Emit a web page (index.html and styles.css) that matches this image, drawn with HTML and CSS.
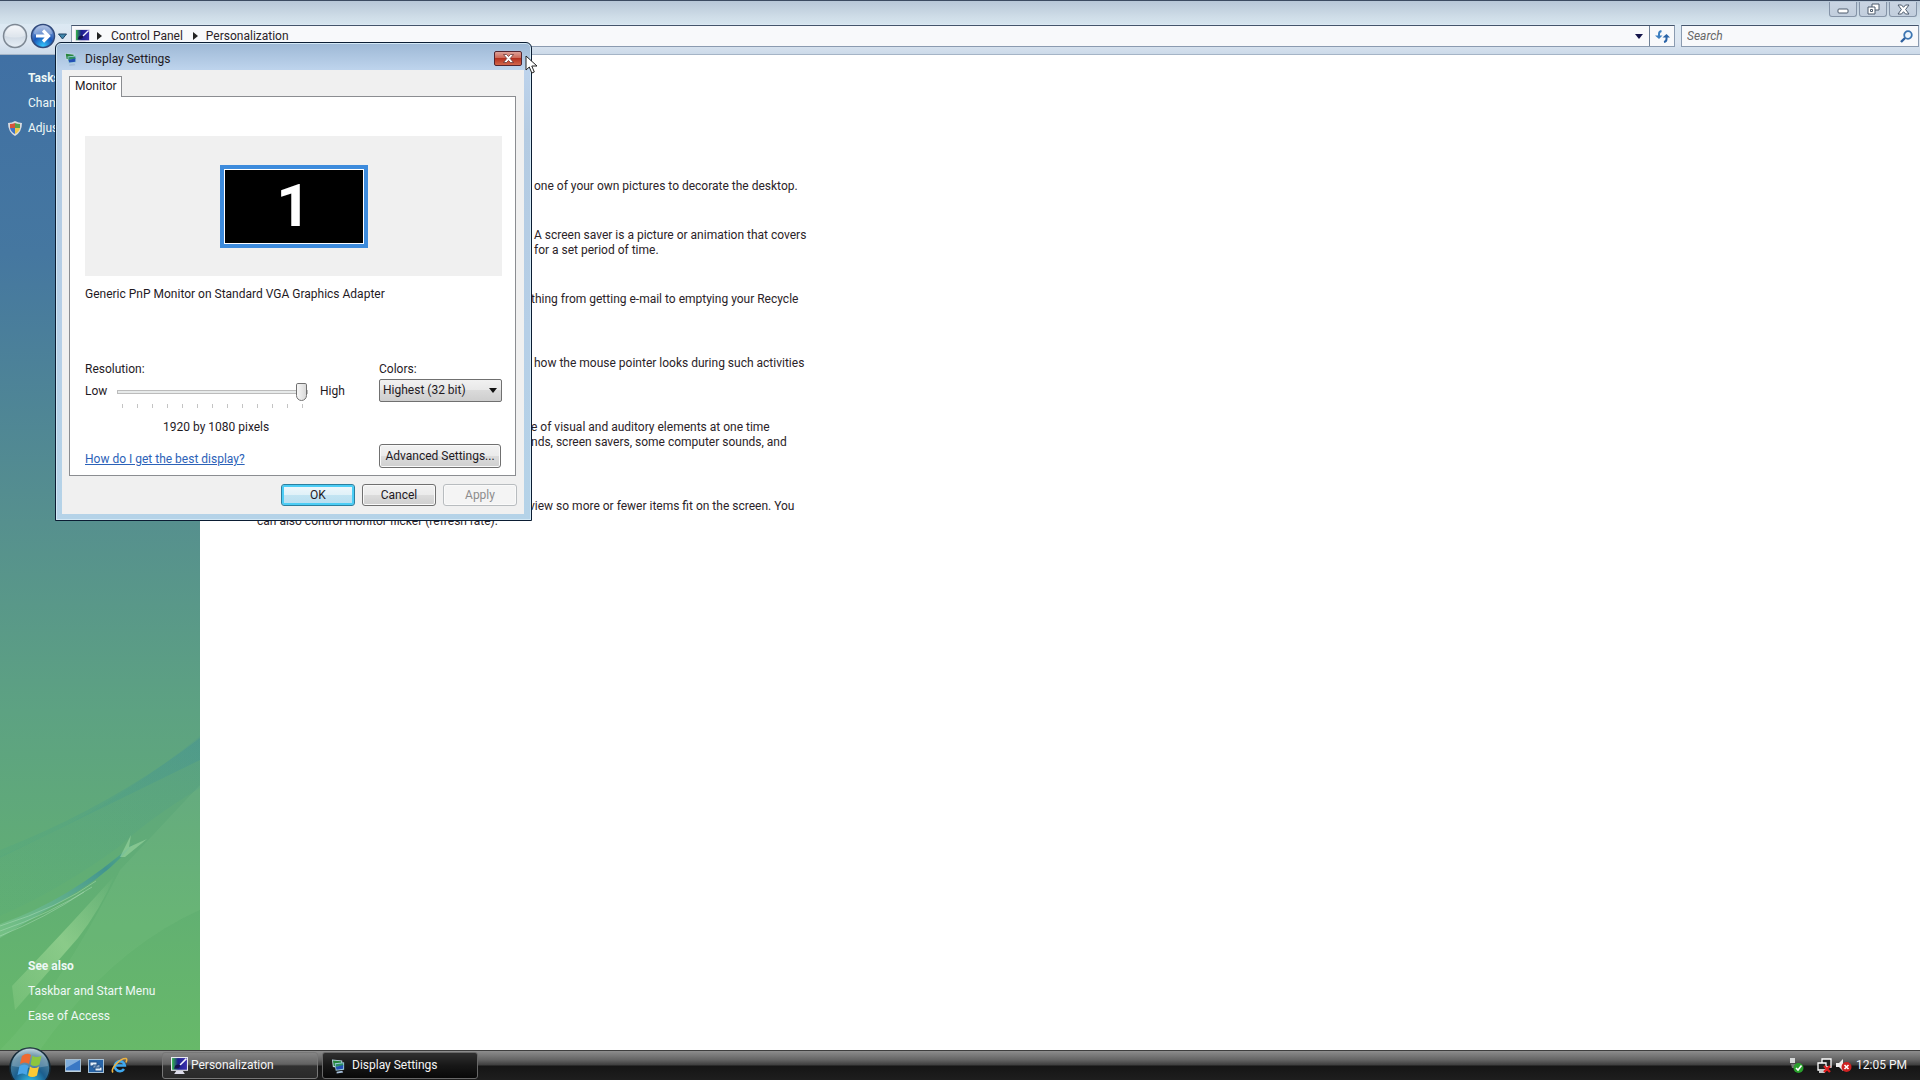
FILE: index.html
```
<!DOCTYPE html>
<html lang="en">
<head>
  <meta charset="UTF-8">
  <title>Personalization</title>
  <meta name="viewport" content="width=device-width, initial-scale=1.0">
  <link rel="stylesheet" href="styles.css">
</head>
<body>
  <svg width="0" height="0" class="defs" aria-hidden="true">
    <defs>
      <linearGradient id="screen" x1="0" y1="0" x2="1" y2="0">
        <stop offset="0" stop-color="#35b84a"/><stop offset=".4" stop-color="#1c1f8c"/><stop offset="1" stop-color="#3b2fae"/>
      </linearGradient>
      <radialGradient id="orb" cx=".5" cy=".9" r=".9">
        <stop offset="0" stop-color="#35c8f2"/><stop offset=".45" stop-color="#1b5f8f"/><stop offset=".8" stop-color="#4f7f99"/><stop offset="1" stop-color="#b9d0da"/>
      </radialGradient>
      <radialGradient id="fwd" cx=".5" cy=".95" r=".9">
        <stop offset="0" stop-color="#35c9ff"/><stop offset=".5" stop-color="#1b57b8"/><stop offset="1" stop-color="#8ba6d8"/>
      </radialGradient>
      <linearGradient id="back" x1="0" y1="0" x2="0" y2="1">
        <stop offset="0" stop-color="#f3f6fa"/><stop offset=".5" stop-color="#cfd9e4"/><stop offset="1" stop-color="#e8eff6"/>
      </linearGradient>
      <symbol id="i-personal" viewBox="0 0 16 16">
        <rect x="0" y="0" width="16" height="13" fill="#e9e9f2"/>
        <rect x="1" y="1" width="14" height="11" fill="url(#screen)"/>
        <path d="M8 7l6-6 1 1-6 6z" fill="#f4f4ff"/>
        <path d="M4 8q3-2 5 0-1 3-6 3z" fill="#16114e"/>
        <path d="M5 13h6l2 3H3z" fill="#dcdcea"/>
      </symbol>
      <symbol id="i-display" viewBox="0 0 16 16">
        <path d="M1 1l11 1v9L2 9z" fill="#bcd5e2"/>
        <path d="M2 2l9 1v4L3 8z" fill="#27853c"/>
        <path d="M4 5l10-1v8l-9 1z" fill="#9ecbdc"/>
        <path d="M5 6l8-1v3L5 9z" fill="#2b8f63"/>
        <path d="M5 9l8-2v4l-7 1z" fill="#2350b4"/>
        <path d="M6 14l6-1 1 2-7 1z" fill="#a6bfd9"/>
      </symbol>
    </defs>
  </svg>

  <div class="window">
    <header class="titlebar">
      <button class="winbtn" aria-label="Minimize"><svg width="12" height="10" viewBox="0 0 12 10"><rect x="1" y="5" width="10" height="4" rx="1" fill="#fff" stroke="#4c5a6c"/></svg></button>
      <button class="winbtn" aria-label="Restore"><svg width="13" height="12" viewBox="0 0 13 12"><path d="M5 1h7v6H5z" fill="#fff" stroke="#4c5a6c"/><path d="M1 4h7v7H1z" fill="#fff" stroke="#4c5a6c"/><path d="M3.500 6.500h2v2h-2z" fill="none" stroke="#4c5a6c"/></svg></button>
      <button class="winbtn" aria-label="Close"><svg width="13" height="11" viewBox="0 0 13 11"><path d="M1 1h3.500l2 2.300L8.500 1H12L8.600 5.500 12 10H8.500l-2-2.300-2 2.300H1l3.400-4.500z" fill="#fff" stroke="#4c5a6c"/></svg></button>
    </header>

    <nav class="navbar">
      <div class="travel">
        <button aria-label="Back"><svg width="26" height="26" viewBox="0 0 26 26"><circle cx="13" cy="13" r="11.500" fill="url(#back)" stroke="#7d8793" stroke-width="1.500"/><path d="M3 13a10 10 0 0 1 20 0q-10 3-20 0z" fill="#fff" opacity=".35"/></svg></button>
        <button aria-label="Forward"><svg width="26" height="26" viewBox="0 0 26 26"><circle cx="13" cy="13" r="11.500" fill="url(#fwd)" stroke="#314a7c" stroke-width="1.500"/><path d="M4 11a9 9 0 0 1 18 0q-9 3-18 0z" fill="#fff" opacity=".3"/><path d="M6 13h12M13 7.500l5.500 5.500-5.500 5.500" fill="none" stroke="#fff" stroke-width="3.200"/></svg></button>
        <button aria-label="Recent pages"><svg width="9" height="7" viewBox="0 0 9 7"><path d="M.5 1h8L4.500 6z" fill="#3f87ac" stroke="#1e4566"/></svg></button>
      </div>
      <div class="address">
        <svg width="15" height="15"><use href="#i-personal"/></svg>
        <svg width="5" height="8" viewBox="0 0 5 8"><path d="M0 0l5 4-5 4z" fill="#222"/></svg>
        <a href="#">Control Panel</a>
        <svg width="5" height="8" viewBox="0 0 5 8"><path d="M0 0l5 4-5 4z" fill="#222"/></svg>
        <a href="#">Personalization</a>
        <button class="drop" aria-label="Previous locations"><svg width="8" height="5" viewBox="0 0 8 5"><path d="M0 0h8L4 5z" fill="#14144a"/></svg></button>
        <button class="refresh" aria-label="Refresh"><svg width="15" height="13" viewBox="0 0 15 13"><path d="M6.500 1Q4 1.500 4 4v3" fill="none" stroke="#3c7fc0" stroke-width="2"/><path d="M0 5.500h7.500L4 9z" fill="#3c7fc0"/><path d="M9 12q2.500-.5 2.500-3V7" fill="none" stroke="#2a64a8" stroke-width="2"/><path d="M7.500 7.500H15L11.500 4z" fill="#2a64a8"/></svg></button>
      </div>
      <div class="search">
        <input type="text" placeholder="Search" aria-label="Search">
        <svg width="13" height="13" viewBox="0 0 13 13"><circle cx="8" cy="5" r="3.800" fill="#eef6fd" stroke="#3d76b2" stroke-width="1.800"/><path d="M5 8l-4 4" stroke="#2d5f9e" stroke-width="2.400"/></svg>
      </div>
    </nav>

    <div class="content">
      <aside class="sidebar">
        <svg class="aurora" viewBox="0 0 200 320" preserveAspectRatio="none" aria-hidden="true">
          <defs>
            <linearGradient id="ray" x1="0" y1="1" x2="1" y2="0"><stop offset="0" stop-color="#4aa482" stop-opacity=".3"/><stop offset="1" stop-color="#3f8e98" stop-opacity=".5"/></linearGradient>
            <linearGradient id="glow" x1="0" y1="1" x2="1" y2="0"><stop offset="0" stop-color="#c5efaf" stop-opacity=".15"/><stop offset=".5" stop-color="#c5efaf" stop-opacity=".4"/><stop offset="1" stop-color="#c5efaf" stop-opacity="0"/></linearGradient>
            <linearGradient id="blade" x1="0" y1="1" x2="1" y2="0"><stop offset="0" stop-color="#8fd7a0" stop-opacity=".4"/><stop offset=".75" stop-color="#378c98" stop-opacity=".75"/><stop offset="1" stop-color="#49a889" stop-opacity=".4"/></linearGradient>
          </defs>
          <path d="M0 126Q110 80 200 6v52Q150 88 120 116 60 160 0 186z" fill="url(#ray)" opacity=".3"/>
          <path d="M0 120Q110 77 200 8v22Q110 74 0 128z" fill="url(#ray)" opacity=".7"/>
          <path d="M0 320Q60 260 120 140L200 55V180Q110 220 40 320z" fill="#9bd6a0" opacity=".1"/>
          <path d="M0 194Q70 170 135 112 112 140 80 160 40 184 0 208z" fill="url(#blade)"/>
          <path d="M12 256Q75 190 115 145 100 180 78 208L15 280z" fill="url(#glow)"/>
          <path d="M0 196Q60 177 96 151M0 201Q50 184 92 157M0 206Q45 188 84 162" fill="none" stroke="#c8efd0" stroke-opacity=".35"/>
          <path d="M120 127l11-22-2 12 18-8-22 18z" fill="#a7dfa9" opacity=".5"/>
        </svg>
        <ul class="links">
          <li><strong>Tasks</strong></li>
          <li><a href="#">Change desktop icons</a></li>
          <li class="shielded"><svg width="14" height="15" viewBox="0 0 14 15"><path d="M7 0q4 2 7 2 0 9-7 13Q0 11 0 2q4 0 7-2z" fill="#d8dbe0"/><path d="M7 2v5H2V3q3 0 5-1z" fill="#d8543a"/><path d="M7 2v5h5V3Q9 3 7 2z" fill="#5aa14b"/><path d="M2 7h5v6Q3 11 2 7z" fill="#3f73c7"/><path d="M12 7H7v6q4-2 5-6z" fill="#f0c94a"/></svg><a href="#">Adjust font size (DPI)</a></li>
        </ul>
        <ul class="links">
          <li><strong>See also</strong></li>
          <li><a href="#">Taskbar and Start Menu</a></li>
          <li><a href="#">Ease of Access</a></li>
        </ul>
      </aside>
      <main class="main">
        <p class="desc">one of your own pictures to decorate the desktop.</p>
        <p class="desc">A screen saver is a picture or animation that covers<br>for a set period of time.</p>
        <p class="desc tall cut">thing from getting e-mail to emptying your Recycle</p>
        <p class="desc tall">how the mouse pointer looks during such activities</p>
        <p class="desc taller cut">e of visual and auditory elements at one time<br>nds, screen savers, some computer sounds, and</p>
        <p class="desc wrap">view so more or fewer items fit on the screen. You<br>can also control monitor flicker (refresh rate).</p>
      </main>
    </div>
  </div>

  <section class="dialog" aria-label="Display Settings">
    <header class="dialog-title">
      <svg width="14" height="14"><use href="#i-display"/></svg>
      <h1>Display Settings</h1>
      <button class="close" aria-label="Close"><svg width="11" height="9" viewBox="0 0 11 9"><path d="M.5.5h3l2 2 2-2h3l-3.300 4 3.300 4h-3l-2-2-2 2h-3l3.300-4z" fill="#fff" stroke="#5b2a2a" stroke-width=".7"/></svg></button>
    </header>
    <form class="dialog-body">
      <div class="tabs"><button type="button" class="tab">Monitor</button></div>
      <div class="panel">
        <div class="preview"><div class="monitor">1</div></div>
        <p class="device">Generic PnP Monitor on Standard VGA Graphics Adapter</p>
        <div class="options">
          <div class="resolution">
            <label for="res">Resolution:</label>
            <div class="slider-row">
              <span>Low</span>
              <div class="track">
                <input id="res" type="range" min="0" max="12" value="12">
                <div class="ticks"><i></i><i></i><i></i><i></i><i></i><i></i><i></i><i></i><i></i><i></i><i></i><i></i><i></i></div>
              </div>
              <span>High</span>
            </div>
            <output for="res">1920 by 1080 pixels</output>
          </div>
          <div class="colors">
            <label for="colors">Colors:</label>
            <div class="combo">
              <select id="colors"><option>Highest (32 bit)</option></select>
              <svg width="8" height="5" viewBox="0 0 8 5"><path d="M0 0h8L4 5z" fill="#111"/></svg>
            </div>
          </div>
        </div>
        <div class="panel-foot">
          <a href="#">How do I get the best display?</a>
          <button type="button" class="btn advanced">Advanced Settings...</button>
        </div>
      </div>
      <div class="actions">
        <button type="button" class="btn default">OK</button>
        <button type="button" class="btn">Cancel</button>
        <button type="button" class="btn" disabled>Apply</button>
      </div>
    </form>
  </section>

  <svg class="cursor" width="14" height="20" viewBox="0 0 14 20" aria-hidden="true"><path d="M1 1v14l3.300-3 2.500 6 2.500-1-2.500-6H12z" fill="#fff" stroke="#222"/></svg>

  <footer class="taskbar">
    <button class="start" aria-label="Start">
      <svg width="42" height="42" viewBox="0 0 42 42">
        <circle cx="21" cy="21" r="20" fill="url(#orb)" stroke="#142a38" stroke-width="1.500"/>
        <path d="M3 19a18 18 0 0 1 36 0q-18 4-36 0z" fill="#fff" opacity=".22"/>
        <path d="M13 9q5-4 9-1l-2 9q-4-3-9 0z" fill="#ee6a30"/>
        <path d="M23.500 8.500q4 3 9 0l-2 9q-5 3-9 0z" fill="#8cc63e"/>
        <path d="M10.500 19q5-3 9 0l-2 9q-4-3-9 0z" fill="#4aa5e8"/>
        <path d="M21 19.500q4 3 9 0l-2 9q-5 3-9 0z" fill="#fbc935"/>
      </svg>
    </button>
    <div class="quick">
      <button aria-label="Show desktop"><svg width="16" height="14" viewBox="0 0 16 14"><rect x=".5" y=".5" width="15" height="12" fill="#3a78c4" stroke="#a4bccd"/><path d="M1 1h14L1 9z" fill="#80aedd"/><path d="M1 12h14" stroke="#dae5ee"/></svg></button>
      <button aria-label="Switch between windows"><svg width="16" height="14" viewBox="0 0 16 14"><rect x=".5" y=".5" width="15" height="13" fill="#2865a8" stroke="#a6c1d6"/><path d="M2 3h7v4H2zM5 6h7v3H5zM7 8h7v4H7z" fill="#e7f1fa" stroke="#245388"/></svg></button>
      <button aria-label="Internet Explorer"><svg width="17" height="17" viewBox="0 0 17 17"><path d="M13 12a5 5 0 1 1 .8-3.500H5" fill="none" stroke="#3fa8ee" stroke-width="2.600"/><path d="M2 15.500C-1 12 9 1 15 1.500q1.500.5 0 4" fill="none" stroke="#eeb440" stroke-width="1.600"/></svg></button>
    </div>
    <div class="tasks">
      <button class="task"><svg width="17" height="17"><use href="#i-personal"/></svg>Personalization</button>
      <button class="task active"><svg width="15" height="16"><use href="#i-display"/></svg>Display Settings</button>
    </div>
    <div class="tray">
      <svg class="safe" width="15" height="17" viewBox="0 0 15 17"><rect x="1" y="1" width="5" height="5" fill="#d5d8d8"/><path d="M2 7h5v4H3z" fill="#777"/><circle cx="9.500" cy="11" r="5" fill="#29a02c"/><path d="M7 11l2 2 3.500-4.500" fill="none" stroke="#fff" stroke-width="1.600"/></svg>
      <svg width="15" height="15" viewBox="0 0 15 15"><path d="M5 1h9v8H5z" fill="#222" stroke="#fff" stroke-width="1.300"/><path d="M1 5h8v7H1zM2 14h6" fill="#222" stroke="#fff" stroke-width="1.300"/><path d="M7 8l6 6M13 8l-6 6" stroke="#de1d1d" stroke-width="2.400"/></svg>
      <svg width="16" height="15" viewBox="0 0 16 15"><path d="M0 5h3l4-4v12L3 9H0z" fill="#eee"/><circle cx="10.500" cy="9" r="5" fill="#cf2222"/><path d="M8.500 7l4 4M12.500 7l-4 4" stroke="#fff" stroke-width="1.600"/></svg>
      <time>12:05 PM</time>
    </div>
  </footer>
</body>
</html>
```
FILE: styles.css
```
* { box-sizing: border-box; }
body {
  margin: 0; height: 100vh; overflow: hidden;
  display: flex; flex-direction: column;
  background: #fff; color: #2b2328;
  font: 12px/15px Roboto, "Open Sans", sans-serif;
}
.defs { position: absolute; }
svg { flex: none; display: block; }
p, h1, ul { margin: 0; padding: 0; font-size: inherit; font-weight: normal; list-style: none; }
button, input, select { font: inherit; color: inherit; margin: 0; padding: 0; border: 0; background: none; }
a { color: inherit; text-decoration: none; }

/* explorer window */
.window { flex: 1; min-height: 0; display: flex; flex-direction: column; }
.titlebar {
  height: 24px; padding: 1px 3px 0; border-top: 1px solid #3c4b61;
  display: flex; justify-content: flex-end; align-items: flex-start; gap: 2px;
  background: linear-gradient(#b7c7d7, #cfdde8 70%, #d5e4ee);
}
.winbtn {
  width: 28px; height: 15px; border: 1px solid #8594a8; border-top: 0;
  border-radius: 0 0 3px 3px; background: linear-gradient(#c9d4e2, #c2cedd);
  display: flex; align-items: center; justify-content: center;
}
.navbar {
  height: 31px; padding: 1px 1px 7px 2px; border-bottom: 1px solid #a5b4c6;
  display: flex; align-items: center; gap: 6px;
  background: linear-gradient(#dce9f3, #dde6f1 60%, #ccdae9);
}
.travel { display: flex; align-items: center; gap: 2px; width: 63px; }
.address {
  flex: 1; height: 22px; padding-left: 3px;
  display: flex; align-items: center; background: #f8f9fb;
  border: 1px solid #8b9bb0; border-top-color: #44546b;
}
.address > svg:nth-child(2) { margin: 0 9px 0 7px; }
.address > svg:nth-of-type(3) { margin: 0 8px 0 10px; }
.drop { margin-left: auto; padding: 6px; }
.refresh { width: 25px; height: 20px; border-left: 1px solid #6f8197; display: flex; align-items: center; justify-content: center; }
.search {
  width: 238px; height: 22px; padding: 0 5px; display: flex; align-items: center;
  background: #f8f9fb; border: 1px solid #8b9bb0; border-top-color: #44546b;
}
.search input { flex: 1; min-width: 0; outline: 0; }
.search input::placeholder { color: #676767; font-style: italic; opacity: 1; }
.content { flex: 1; min-height: 0; display: flex; }

.sidebar {
  position: relative; width: 200px; flex: none; padding: 11px 0 21px 28px;
  display: flex; flex-direction: column; justify-content: space-between;
  color: #eef8f6;
  background: linear-gradient(#4070a4, #4577a0 20%, #56908e 47%, #5da282 66%, #62b072 86%, #67b969);
}
.aurora { position: absolute; left: 0; bottom: 0; width: 100%; height: 320px; }
.links { position: relative; line-height: 25px; white-space: nowrap; }
.shielded { display: flex; align-items: center; gap: 6px; margin-left: -20px; }
.main { flex: 1; padding: 124px 0 0 57px; display: flex; flex-direction: column; gap: 34px; }
.desc { padding-left: 277px; }
.tall { min-height: 30px; }
.taller { min-height: 45px; }
.cut { padding-left: 274px; }
.wrap { padding-left: 0; text-indent: 272px; }

/* display settings */
.dialog {
  position: absolute; left: 55px; top: 42px; width: 477px;
  border: 1px solid #0b1d33; border-radius: 6px 6px 0 0; padding: 0 7px 6px 6px;
  background: linear-gradient(#9db8d5, #bdd3ec 26px, #b4cbe2 90px, #b6cfe7 60%, #b5d3e8);
  box-shadow: inset 0 0 0 1px #d3e8f5;
  color: #1f1a1f;
}
.dialog-title { height: 27px; padding: 5px 2px 0; display: flex; align-items: center; gap: 7px; }
.close {
  margin: 0 0 2px auto; width: 28px; height: 15px; border: 1px solid #53252f; border-radius: 2px;
  display: flex; align-items: center; justify-content: center;
  background: linear-gradient(#dda198, #cc6553 48%, #b4311f 50%, #d2664b);
}
.dialog-body { background: #f0f0f0; padding: 6px 8px 8px 7px; }
.tabs { display: flex; }
.tab {
  height: 21px; padding: 0 4px 1px 5px; margin-bottom: -1px; position: relative;
  background: #fff; border: 1px solid #8b8d91; border-bottom: 0;
}
.panel { background: #fff; border: 1px solid #8b8d91; padding: 39px 13px 7px 15px; }
.preview { height: 140px; background: #f0f0f0; display: flex; align-items: center; justify-content: center; }
.monitor {
  width: 148px; height: 83px; border: 4px solid #3d8bdc; box-shadow: inset 0 0 0 1px #fff;
  background: #000; color: #fff; text-align: center;
  font: bold 60px/73px Roboto, sans-serif;
}
.device { margin-top: 11px; }
.options { display: flex; justify-content: space-between; margin-top: 60px; }
.resolution { width: 262px; }
.slider-row { display: flex; gap: 10px; height: 36px; margin-top: 7px; }
.slider-row span:last-child { width: 27px; margin-left: 2px; }
.track { flex: 1; }
.track input { display: block; width: 100%; height: 18px; appearance: none; -webkit-appearance: none; margin-top: -1px; }
.track input::-webkit-slider-runnable-track { height: 4px; border: 1px solid #bcbcbc; background: #e7eaea; }
.track input::-webkit-slider-thumb {
  -webkit-appearance: none; width: 11px; height: 18px; margin-top: -8px;
  border: 1px solid #707070; border-radius: 2px 2px 6px 6px;
  background: linear-gradient(90deg, #f7f7f7, #d9d9d9);
}
.ticks { display: flex; justify-content: space-between; padding: 3px 5px 0; }
.ticks i { width: 1px; height: 4px; background: #c4c4c4; }
.resolution output { display: block; padding-left: 78px; }
.colors { width: 123px; }
.combo { position: relative; margin-top: 2px; }
.combo select {
  appearance: none; width: 100%; height: 23px; padding: 0 3px; display: block;
  border: 1px solid #707070; border-radius: 2px;
  background: linear-gradient(#f1f1f1, #e8e8e8 48%, #dadada 50%, #cecece);
}
.combo svg { position: absolute; right: 5px; top: 9px; pointer-events: none; }
.panel-foot { display: flex; justify-content: space-between; align-items: flex-end; margin-top: 9px; }
.panel-foot a { color: #2c62b8; text-decoration: underline; padding-bottom: 1px; }
.btn {
  width: 74px; height: 22px; border: 1px solid #707070; border-radius: 3px;
  box-shadow: inset 0 0 0 1px #fafafa;
  background: linear-gradient(#f2f2f2, #ebebeb 48%, #dcdcdc 50%, #cfcfcf);
}
.advanced { width: 122px; height: 24px; margin-right: 1px; white-space: nowrap; }
.default { border-color: #2c7f9f; box-shadow: inset 0 0 0 2px #4ccdf5; background: linear-gradient(#f0f8fc, #e0f1f8 48%, #c2e4f2 50%, #b8def0); }
.btn:disabled { border-color: #b8bcbf; background: #f4f4f4; color: #8c8c8c; }
.actions { display: flex; justify-content: flex-end; gap: 7px; margin: 8px -1px 0 0; }
.cursor { position: absolute; left: 525px; top: 55px; }

/* taskbar */
.taskbar {
  height: 30px; flex: none; padding-left: 9px; border-top: 1px solid #3d3d3d;
  display: flex; align-items: center; color: #f4f4f4; position: relative;
  background: linear-gradient(#8d8d8d, #646464 30%, #3e3e3e 48%, #151515 52%, #1e1e1e);
}
.start { height: 30px; width: 42px; display: flex; margin: -8px 14px 0 0; }
.quick { display: flex; align-items: center; gap: 7px; width: 97px; }
.tasks { display: flex; gap: 4px; }
.task {
  width: 156px; height: 27px; padding-left: 8px; display: flex; align-items: center; gap: 3px;
  border: 1px solid #777; border-radius: 3px; white-space: nowrap;
  background: linear-gradient(#858585, #626262 45%, #313131 52%, #292929);
}
.task.active { gap: 6px; background: linear-gradient(#303030, #171717 50%, #080808); border-color: #686868; }
.tray { margin-left: auto; padding-right: 13px; display: flex; align-items: center; gap: 4px; }
.safe { margin-right: 9px; }
```
